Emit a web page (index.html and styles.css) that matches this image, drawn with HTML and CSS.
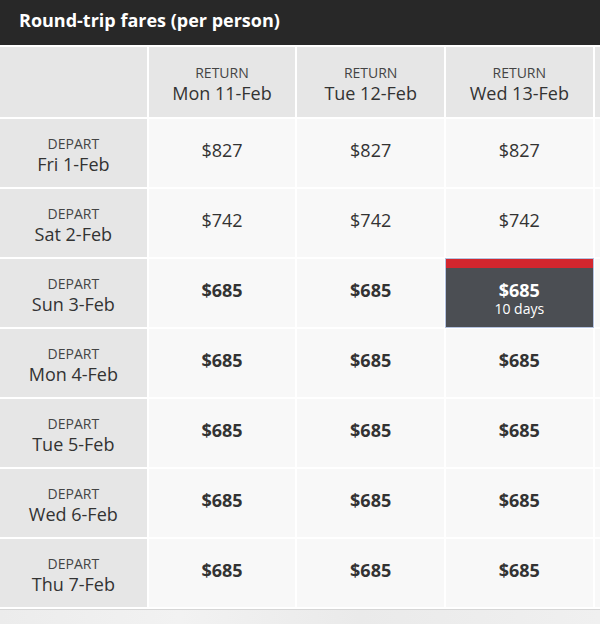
FILE: index.html
```html
<!DOCTYPE html>
<html lang="en">
<head>
<meta charset="utf-8">
<title>Round-trip fares</title>
<link rel="stylesheet" href="styles.css">
</head>
<body>
<div class="panel">
  <div class="panel-title">Round-trip fares (per person)</div>
  <div class="fares">
    <div class="fare-grid">
      <div class="cell head corner"></div>
      <div class="cell head"><span class="small">RETURN</span><span class="big">Mon 11-Feb</span></div>
      <div class="cell head"><span class="small">RETURN</span><span class="big">Tue 12-Feb</span></div>
      <div class="cell head"><span class="small">RETURN</span><span class="big">Wed 13-Feb</span></div>
      <div class="cell head"></div>

      <div class="cell head"><span class="small">DEPART</span><span class="big">Fri 1-Feb</span></div>
      <div class="cell price">$827</div>
      <div class="cell price">$827</div>
      <div class="cell price">$827</div>
      <div class="cell price"></div>

      <div class="cell head"><span class="small">DEPART</span><span class="big">Sat 2-Feb</span></div>
      <div class="cell price">$742</div>
      <div class="cell price">$742</div>
      <div class="cell price">$742</div>
      <div class="cell price"></div>

      <div class="cell head"><span class="small">DEPART</span><span class="big">Sun 3-Feb</span></div>
      <div class="cell price best">$685</div>
      <div class="cell price best">$685</div>
      <div class="cell selected"><span class="sel-price">$685</span><span class="sel-days">10 days</span></div>
      <div class="cell price"></div>

      <div class="cell head"><span class="small">DEPART</span><span class="big">Mon 4-Feb</span></div>
      <div class="cell price best">$685</div>
      <div class="cell price best">$685</div>
      <div class="cell price best">$685</div>
      <div class="cell price"></div>

      <div class="cell head"><span class="small">DEPART</span><span class="big">Tue 5-Feb</span></div>
      <div class="cell price best">$685</div>
      <div class="cell price best">$685</div>
      <div class="cell price best">$685</div>
      <div class="cell price"></div>

      <div class="cell head"><span class="small">DEPART</span><span class="big">Wed 6-Feb</span></div>
      <div class="cell price best">$685</div>
      <div class="cell price best">$685</div>
      <div class="cell price best">$685</div>
      <div class="cell price"></div>

      <div class="cell head"><span class="small">DEPART</span><span class="big">Thu 7-Feb</span></div>
      <div class="cell price best">$685</div>
      <div class="cell price best">$685</div>
      <div class="cell price best">$685</div>
      <div class="cell price"></div>
    </div>
  </div>
</div>
</body>
</html>
```

FILE: styles.css
```css
html, body {
  margin: 0;
  padding: 0;
}
body {
  width: 600px;
  height: 624px;
  overflow: hidden;
  background: linear-gradient(90deg, #ececec 0%, #f2f2f2 30%, #eaeaea 60%, #f0f0f0 100%);
  font-family: "Open Sans", "Noto Sans", sans-serif;
  color: #333;
}
.panel {
  width: 600px;
  overflow: hidden;
}
.panel-title {
  height: 45px;
  box-sizing: border-box;
  padding: 0 0 5px 19px;
  display: flex;
  align-items: center;
  background: #282828;
  color: #fff;
  font-size: 18px;
  font-weight: 700;
}
.fares {
  background: #fff;
  padding: 2px 0;
  border-bottom: 1px solid #d6d6d6;
  overflow: hidden;
}
.fare-grid {
  display: grid;
  grid-template-columns: repeat(5, 146.67px);
  grid-template-rows: 70px;
  grid-auto-rows: 68px;
  row-gap: 2px;
  column-gap: 2px;
  width: 741px;
}
.cell {
  display: flex;
  flex-direction: column;
  align-items: center;
  justify-content: center;
  box-sizing: border-box;
}
.head {
  background: #e6e6e6;
  padding-top: 5px;
}
.small {
  font-size: 14px;
  line-height: 17px;
  color: #444;
}
.big {
  font-size: 18px;
  line-height: 24px;
  color: #333;
}
.price {
  background: #f8f8f8;
  font-size: 18px;
  line-height: 24px;
  padding-bottom: 6px;
  color: #333;
}
.best {
  font-weight: 700;
}
.selected {
  background: #4b4e53;
  border-top: 9px solid #d2262e;
  outline: 1px solid #b5c3e0;
  color: #fff;
  padding-top: 1px;
}
.sel-price {
  font-size: 18px;
  font-weight: 700;
  line-height: 20px;
}
.sel-days {
  font-size: 14px;
  line-height: 17px;
}
```
